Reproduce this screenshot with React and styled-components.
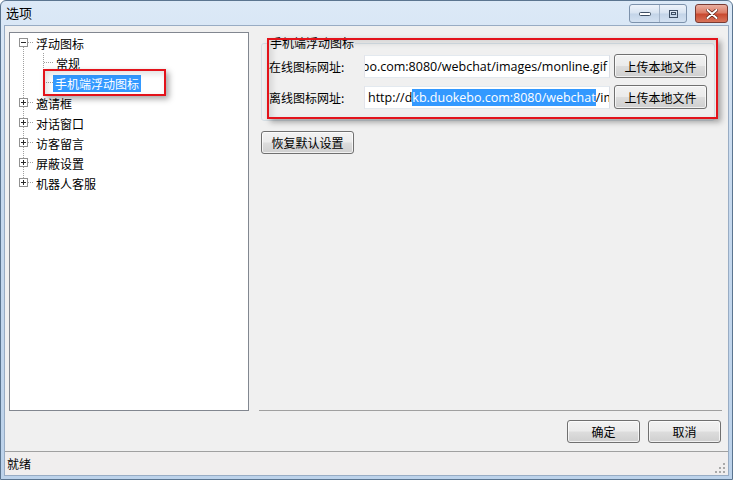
import React from 'react';
import styled, { createGlobalStyle } from 'styled-components';

const GlobalStyle = createGlobalStyle`
  html, body {
    margin: 0;
    padding: 0;
    background: #fff;
  }
  body {
    font-family: "Noto Sans CJK SC", "Open Sans", sans-serif;
    font-size: 12px;
    color: #000;
  }
`;

const CJK = `"Noto Sans CJK SC", sans-serif`;
const LATIN = `"Open Sans", "Noto Sans CJK SC", sans-serif`;

const Window = styled.div`
  width: 733px;
  height: 480px;
  box-sizing: border-box;
  display: flex;
  flex-direction: column;
  border: 1px solid #5b7590;
  border-radius: 6px 6px 0 0;
  background: linear-gradient(180deg, #dce9f7 0%, #c6d9ee 40%, #bcd2ea 100%);
  overflow: hidden;
`;

const TitleBar = styled.div`
  height: 24px;
  display: flex;
  align-items: center;
  padding: 0 4px 0 5px;
  flex-shrink: 0;
`;

const Title = styled.div`
  flex: 1;
  font-family: ${CJK};
  font-size: 13px;
  color: #000;
  line-height: 24px;
`;

const Controls = styled.div`
  display: flex;
  align-items: flex-start;
  gap: 8px;
  align-self: flex-start;
  margin-top: 3px;
`;

const CaptionGroup = styled.div`
  display: flex;
  height: 17px;
  border: 1px solid #7d92ac;
  border-radius: 3px;
  overflow: hidden;
  background: linear-gradient(180deg, #eef3fa 0%, #d7e3f1 48%, #c3d4e8 52%, #d3e1f1 100%);
`;

const CaptionBtn = styled.div`
  width: ${p => p.w}px;
  display: flex;
  align-items: center;
  justify-content: center;
  & + & {
    border-left: 1px solid #a3b4c9;
  }
`;

const CloseBtn = styled.div`
  width: 31px;
  height: 17px;
  border: 1px solid #7a3b33;
  border-radius: 3px;
  display: flex;
  align-items: center;
  justify-content: center;
  background: linear-gradient(180deg, #eab0a2 0%, #dc7c66 45%, #c94a31 55%, #d8735a 100%);
`;

const Client = styled.div`
  flex: 1;
  margin: 0 3px 3px 3px;
  background: #f0f0f0;
  border: 1px solid #98acc4;
  display: flex;
  flex-direction: column;
  min-height: 0;
`;

const Main = styled.div`
  display: flex;
  gap: 10px;
  padding: 6px 6px 0 4px;
  height: 379px;
  box-sizing: content-box;
`;

const TreePanel = styled.div`
  width: 240px;
  height: 379px;
  box-sizing: border-box;
  background: #fff;
  border: 1px solid #828790;
  padding: 0 0 0 4px;
  font-family: ${CJK};
  font-size: 12px;
`;

const Row = styled.div`
  position: relative;
  height: 20px;
  display: flex;
  align-items: center;
`;

const NodeLabel = styled.span`
  padding: 0 2px;
  height: 17px;
  line-height: 17px;
  margin-left: ${p => p.shift || 0}px;
  background: ${p => (p.selected ? '#3399ff' : 'transparent')};
  color: ${p => (p.selected ? '#fff' : '#000')};
`;

const Callout = styled.div`
  position: absolute;
  left: ${p => p.l}px;
  top: ${p => p.t}px;
  width: ${p => p.w}px;
  height: ${p => p.h}px;
  box-sizing: border-box;
  border: 2px solid #e3131b;
  box-shadow: 3px 3px 6px rgba(0, 0, 0, 0.35), inset 3px 3px 6px rgba(0, 0, 0, 0.12);
  pointer-events: none;
`;

const RightPanel = styled.div`
  position: relative;
  flex: 1;
  display: flex;
  flex-direction: column;
  align-items: flex-start;
`;

const GroupBox = styled.fieldset`
  margin: 5px 7px 0 2px;
  align-self: stretch;
  border: 1px solid #d5dfe5;
  border-radius: 3px;
  padding: 5px 7px 11px 7px;
  display: flex;
  flex-direction: column;
  gap: 7px;
`;

const Legend = styled.legend`
  font-family: ${CJK};
  font-size: 12px;
  padding: 0 1px;
  margin-left: 0;
  line-height: 12px;
  color: #000;
`;

const FieldRow = styled.div`
  display: flex;
  align-items: center;
`;

const FieldLabel = styled.div`
  width: 95px;
  font-family: ${CJK};
  font-size: 12px;
`;

const TextBox = styled.div`
  width: 246px;
  height: 23px;
  box-sizing: border-box;
  border: 1px solid #abadb3;
  border-top-color: #e3e9ef;
  border-left-color: #e2e3ea;
  border-right-color: #dbdfe6;
  border-bottom-color: #e3e9ef;
  background: #fff;
  overflow: hidden;
  display: flex;
  align-items: center;
  justify-content: ${p => (p.end ? 'flex-end' : 'flex-start')};
  padding: 0 2px 0 3px;
  font-family: ${LATIN};
  font-size: 12.5px;
  white-space: nowrap;
`;

const Sel = styled.span`
  background: #3399ff;
  color: #fff;
`;

const Button = styled.button`
  width: ${p => p.w || 93}px;
  height: ${p => p.h || 24}px;
  margin-left: ${p => p.ml || 0}px;
  border: 1px solid #707070;
  border-radius: 3px;
  background: linear-gradient(180deg, #f2f2f2 0%, #ebebeb 49%, #dddddd 51%, #cfcfcf 100%);
  box-shadow: inset 0 0 0 1px rgba(255, 255, 255, 0.7);
  font-family: ${CJK};
  font-size: 12px;
  color: #000;
  padding: 0;
  flex-shrink: 0;
`;

const ResetButton = styled(Button)`
  margin: 10px 0 0 2px;
`;

const Separator = styled.div`
  margin-top: auto;
  align-self: stretch;
  height: 1px;
  background: #a0a0a0;
`;

const Footer = styled.div`
  display: flex;
  justify-content: flex-end;
  gap: 8px;
  padding: 9px 7px 0 0;
  height: 23px;
  box-sizing: content-box;
`;

const StatusBar = styled.div`
  margin-top: auto;
  height: 23px;
  border-top: 1px solid #a0a0a0;
  background: #f0eeee;
  display: flex;
  align-items: center;
  justify-content: space-between;
  padding: 0 2px 0 2px;
  font-family: ${CJK};
  font-size: 12px;
`;

const Grip = () => (
  <svg width="12" height="12" viewBox="0 0 12 12" style={{ alignSelf: 'flex-end', marginBottom: 1 }}>
    {[[9, 1], [9, 5], [5, 5], [9, 9], [5, 9], [1, 9]].map(([x, y], i) => (
      <rect key={i} x={x} y={y} width="2" height="2" fill="#a9a9a9" />
    ))}
  </svg>
);

// tree connector cell: line = first | mid | last | pipe ; box = plus | minus
const Gutter = ({ line, box }) => {
  const top = line === 'mid' || line === 'last' || line === 'pipe';
  const bottom = line === 'mid' || line === 'first' || line === 'pipe';
  const c = '#a0a0a0';
  return (
    <svg width="20" height="20" viewBox="0 0 20 20" style={{ flexShrink: 0 }}>
      {top && <line x1="9.5" y1="0" x2="9.5" y2="10" stroke={c} strokeDasharray="1 1" />}
      {bottom && <line x1="9.5" y1="10" x2="9.5" y2="20" stroke={c} strokeDasharray="1 1" />}
      {line !== 'pipe' && (
        <line x1="10" y1="9.5" x2="20" y2="9.5" stroke={c} strokeDasharray="1 1" />
      )}
      {box && (
        <g>
          <rect x="5.5" y="5.5" width="8" height="8" fill="#fff" stroke="#919191" />
          <line x1="7" y1="9.5" x2="12" y2="9.5" stroke="#2b2b2b" />
          {box === 'plus' && <line x1="9.5" y1="7" x2="9.5" y2="12" stroke="#2b2b2b" />}
        </g>
      )}
    </svg>
  );
};

const topItems = ['邀请框', '对话窗口', '访客留言', '屏蔽设置', '机器人客服'];

const MinIcon = () => (
  <svg width="12" height="6" viewBox="0 0 12 6">
    <rect x="0.5" y="1.5" width="11" height="3" rx="1" fill="#fff" stroke="#3d4e63" />
  </svg>
);

const MaxIcon = () => (
  <svg width="9" height="8" viewBox="0 0 9 8">
    <rect x="0.5" y="0.5" width="8" height="7" fill="none" stroke="#3d4e63" />
    <rect x="2.5" y="2.5" width="4" height="2" fill="none" stroke="#3d4e63" />
  </svg>
);

const CloseIcon = () => (
  <svg width="12" height="10" viewBox="0 0 12 10">
    <path d="M1.5 1 L10.5 9 M10.5 1 L1.5 9" stroke="#5a2018" strokeWidth="3.4" strokeLinecap="round" />
    <path d="M1.5 1 L10.5 9 M10.5 1 L1.5 9" stroke="#fff" strokeWidth="2" strokeLinecap="round" />
  </svg>
);

export default function App() {
  return (
    <>
      <GlobalStyle />
      <Window>
        <TitleBar>
          <Title>选项</Title>
          <Controls>
            <CaptionGroup>
              <CaptionBtn w={29}><MinIcon /></CaptionBtn>
              <CaptionBtn w={26}><MaxIcon /></CaptionBtn>
            </CaptionGroup>
            <CloseBtn><CloseIcon /></CloseBtn>
          </Controls>
        </TitleBar>

        <Client>
          <Main>
            <TreePanel>
              <Row>
                <Gutter line="first" box="minus" />
                <NodeLabel>浮动图标</NodeLabel>
              </Row>
              <Row>
                <Gutter line="pipe" />
                <Gutter line="mid" />
                <NodeLabel>常规</NodeLabel>
              </Row>
              <Row>
                <Gutter line="pipe" />
                <Gutter line="last" />
                <NodeLabel selected shift={-1}>手机端浮动图标</NodeLabel>
                <Callout l={29} t={-4} w={123} h={27} />
              </Row>
              {topItems.map((t, i) => (
                <Row key={t}>
                  <Gutter line={i === topItems.length - 1 ? 'last' : 'mid'} box="plus" />
                  <NodeLabel>{t}</NodeLabel>
                </Row>
              ))}
            </TreePanel>

            <RightPanel>
              <GroupBox>
                <Legend>手机端浮动图标</Legend>
                <FieldRow>
                  <FieldLabel>在线图标网址:</FieldLabel>
                  <TextBox end>http://dkb.duokebo.com:8080/webchat/images/monline.gif</TextBox>
                  <Button ml={4}>上传本地文件</Button>
                </FieldRow>
                <FieldRow>
                  <FieldLabel>离线图标网址:</FieldLabel>
                  <TextBox>
                    http://d<Sel>kb.duokebo.com:8080/webchat</Sel>/images/moffline.gif
                  </TextBox>
                  <Button ml={4}>上传本地文件</Button>
                </FieldRow>
              </GroupBox>
              <ResetButton h={23}>恢复默认设置</ResetButton>
              <Separator />
              <Callout l={8} t={6} w={451} h={81} />
            </RightPanel>
          </Main>

          <Footer>
            <Button w={73} h={23}>确定</Button>
            <Button w={73} h={23}>取消</Button>
          </Footer>

          <StatusBar>
            <span>就绪</span>
            <Grip />
          </StatusBar>
        </Client>
      </Window>
    </>
  );
}
